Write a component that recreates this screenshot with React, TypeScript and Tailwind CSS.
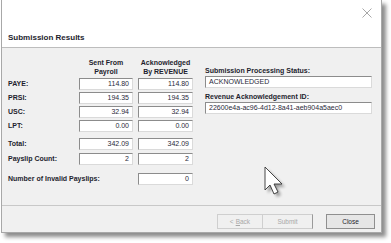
import React from "react";

const font = { fontFamily: '"Liberation Sans", Arial, sans-serif' };

function Box({ value, w = "w-[55px]", align = "text-right" }: { value: string; w?: string; align?: string }) {
  return (
    <div
      className={`${w} h-[12px] bg-white border border-t-[#8c8c8c] border-l-[#8c8c8c] border-r-[#dadada] border-b-[#dadada] ${align} px-[3px] text-[7px] leading-[10px] text-[#2a2a3a]`}
    >
      {value}
    </div>
  );
}

function Row({ label, a, b }: { label: string; a?: string; b: string }) {
  return (
    <div className="flex items-center h-[12px]">
      <div className="w-[71px] whitespace-nowrap font-bold text-[7px] text-[#1e1e2e]">{label}</div>
      {a !== undefined ? <Box value={a} w="w-[54px]" /> : <div className="w-[54px]" />}
      <div className="w-[5px]" />
      <Box value={b} />
    </div>
  );
}

function Cursor() {
  return (
    <svg className="absolute left-[264px] top-[166px]" width="24" height="34" viewBox="0 0 24 34">
      <defs>
        <filter id="sh" x="-50%" y="-50%" width="200%" height="200%">
          <feGaussianBlur stdDeviation="1.5" />
        </filter>
      </defs>
      <path d="M4 4 L4 27 L9 22 L13 31 L17 29 L13 21 L21 21 Z" fill="#000" opacity="0.35" filter="url(#sh)" />
      <path d="M1 1 L1 24 L6 19 L10 28 L14 26 L10 18 L18 18 Z" fill="#fff" stroke="#333" strokeWidth="0.9" strokeLinejoin="round" />
    </svg>
  );
}

export default function App() {
  return (
    <div className="relative w-[391px] h-[243px] bg-white" style={font}>
      <div className="ml-[1px] w-[381px] h-[233px] flex flex-col border border-[#a8a8a8] border-t-0 shadow-[4px_4px_4px_rgba(0,0,0,0.45)]">
        {/* header */}
        <div className="h-[48px] bg-white border-b border-[#bdbdbd] flex flex-col px-[6px]">
          <div className="flex justify-end pt-[8px] pr-[3px]">
            <svg width="10" height="10" viewBox="0 0 10 10">
              <path d="M0.5 0.5 L9.5 9.5 M9.5 0.5 L0.5 9.5" stroke="#a8a8a8" strokeWidth="1" />
            </svg>
          </div>
          <div className="mt-[14px] font-bold text-[8px] text-[#1e1e2e]">Submission Results</div>
        </div>

        {/* content */}
        <div className="flex-1 bg-[#f0f0f0] flex px-[6px] pt-[10px]">
          <div className="flex flex-col">
            <div className="flex h-[20px] font-bold text-[7px] leading-[9px] text-[#1e1e2e] text-center">
              <div className="w-[71px]" />
              <div className="w-[54px]">Sent From<br />Payroll</div>
              <div className="w-[5px]" />
              <div className="w-[55px]">Acknowledged<br />By REVENUE</div>
            </div>
            <div className="flex flex-col gap-[2px]">
              <Row label="PAYE:" a="114.80" b="114.80" />
              <Row label="PRSI:" a="194.35" b="194.35" />
              <Row label="USC:" a="32.94" b="32.94" />
              <Row label="LPT:" a="0.00" b="0.00" />
            </div>
            <div className="flex flex-col gap-[3px] mt-[6px]">
              <Row label="Total:" a="342.09" b="342.09" />
              <Row label="Payslip Count:" a="2" b="2" />
            </div>
            <div className="mt-[8px]">
              <Row label="Number of Invalid Payslips:" b="0" />
            </div>
          </div>
          <div className="ml-[12px] flex flex-col pt-[8px]">
            <div className="font-bold text-[7px] leading-[9px] text-[#1e1e2e]">Submission Processing Status:</div>
            <div className="mt-[1px]">
              <Box value="ACKNOWLEDGED" w="w-[167px]" align="text-left" />
            </div>
            <div className="mt-[4px] font-bold text-[7px] leading-[9px] text-[#1e1e2e]">Revenue Acknowledgement ID:</div>
            <div className="mt-[1px]">
              <Box value="22600e4a-ac96-4d12-8a41-aeb904a5aec0" w="w-[167px]" align="text-left" />
            </div>
          </div>
        </div>

        {/* footer */}
        <div className="h-[27px] bg-[#f0f0f0] border-t border-[#c8c8c8] flex items-start justify-end pt-[8px] pr-[6px]">
          <div className="flex">
            <div className="w-[46px] h-[15px] border border-[#cfcfcf] bg-[#f0f0f0] text-[#a8a8a8] text-[6.5px] flex items-center justify-center">
              &lt; <span className="underline ml-[2px]">B</span>ack
            </div>
            <div className="w-[50px] h-[15px] border border-l-0 border-[#cfcfcf] border-r-[#9a9a9a] bg-[#f0f0f0] text-[#a8a8a8] text-[6.5px] flex items-center justify-center">
              Submit
            </div>
          </div>
          <div className="ml-[13px] w-[49px] h-[15px] border border-[#8f8f8f] bg-[#e6e6e6] text-[#1e1e2e] text-[6.5px] flex items-center justify-center">
            Close
          </div>
        </div>
      </div>
      <Cursor />
    </div>
  );
}
